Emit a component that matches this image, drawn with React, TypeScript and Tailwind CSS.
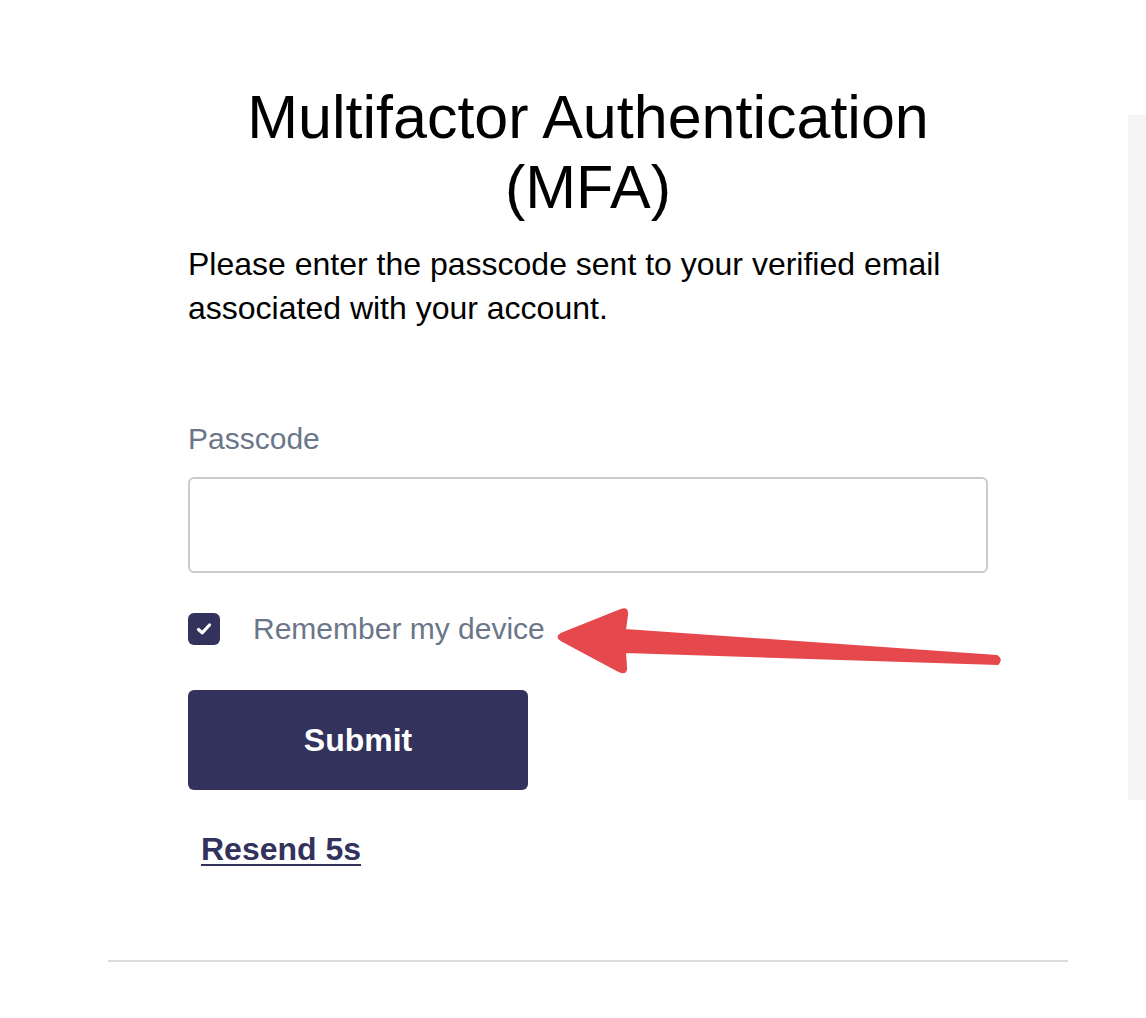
import React from "react";

// red annotation arrow lying over the form
function Arrow() {
  return (
    <svg
      className="pointer-events-none absolute left-0 top-0"
      width="1146"
      height="1018"
      viewBox="0 0 1146 1018"
    >
      <path
        d="M561 634 L621 610 Q628 607 627 615 L625 630 L997 656 Q1002 659 998 664 L625 652 L626 667 Q627 675 619 671 L561 640 Q556 637 561 634 Z"
        fill="#e5484d"
        stroke="#e5484d"
        strokeWidth="2"
        strokeLinejoin="round"
      />
    </svg>
  );
}

export default function App() {
  return (
    <div
      className="relative min-h-[1018px] w-full bg-white"
      style={{ fontFamily: '"Liberation Sans", Arial, sans-serif' }}
    >
      <div className="flex">
        <div className="ml-[108px] w-[960px]">
          <div className="px-[80px] pt-[82px]">
            <h1 className="text-center text-[61px] font-normal leading-[70px] text-black">
              Multifactor Authentication
              <br />
              (MFA)
            </h1>
            <p className="mt-[20px] text-[32px] leading-[44px] text-black">
              Please enter the passcode sent to your verified email associated with your account.
            </p>

            <label className="mt-[91px] block text-[30px] leading-[36px] text-[#6b7689]">Passcode</label>
            <input
              type="text"
              className="mt-[20px] block h-[96px] w-full rounded-[6px] border-2 border-[#c9ccd1] bg-white px-4 text-[30px] outline-none"
            />

            <div className="mt-[38px] flex items-center">
              <span className="flex h-[32px] w-[32px] items-center justify-center rounded-[6px] bg-[#32325d]">
                <svg width="16" height="14" viewBox="0 0 16 14">
                  <path
                    d="M2.5 7.5 L6.2 10.8 L13.5 3"
                    fill="none"
                    stroke="white"
                    strokeWidth="3.2"
                    strokeLinecap="round"
                    strokeLinejoin="round"
                  />
                </svg>
              </span>
              <span className="ml-[33px] text-[30px] leading-[36px] text-[#6b7689]">Remember my device</span>
            </div>

            <button
              type="button"
              className="mt-[43px] flex h-[100px] w-[340px] items-center justify-center rounded-[6px] bg-[#32325d] text-[32px] font-bold text-white"
            >
              Submit
            </button>

            <div className="mt-[39px] pl-[13px]">
              <a className="text-[32px] font-bold leading-[40px] text-[#32325d] underline decoration-2 underline-offset-[4px]">
                Resend 5s
              </a>
            </div>
          </div>
          <div className="mt-[91px] h-[2px] w-full bg-[#dcdcdc]" />
        </div>
        <div className="ml-[60px] mt-[115px] h-[685px] flex-1 bg-[#f5f5f5]" />
      </div>
      <Arrow />
    </div>
  );
}
